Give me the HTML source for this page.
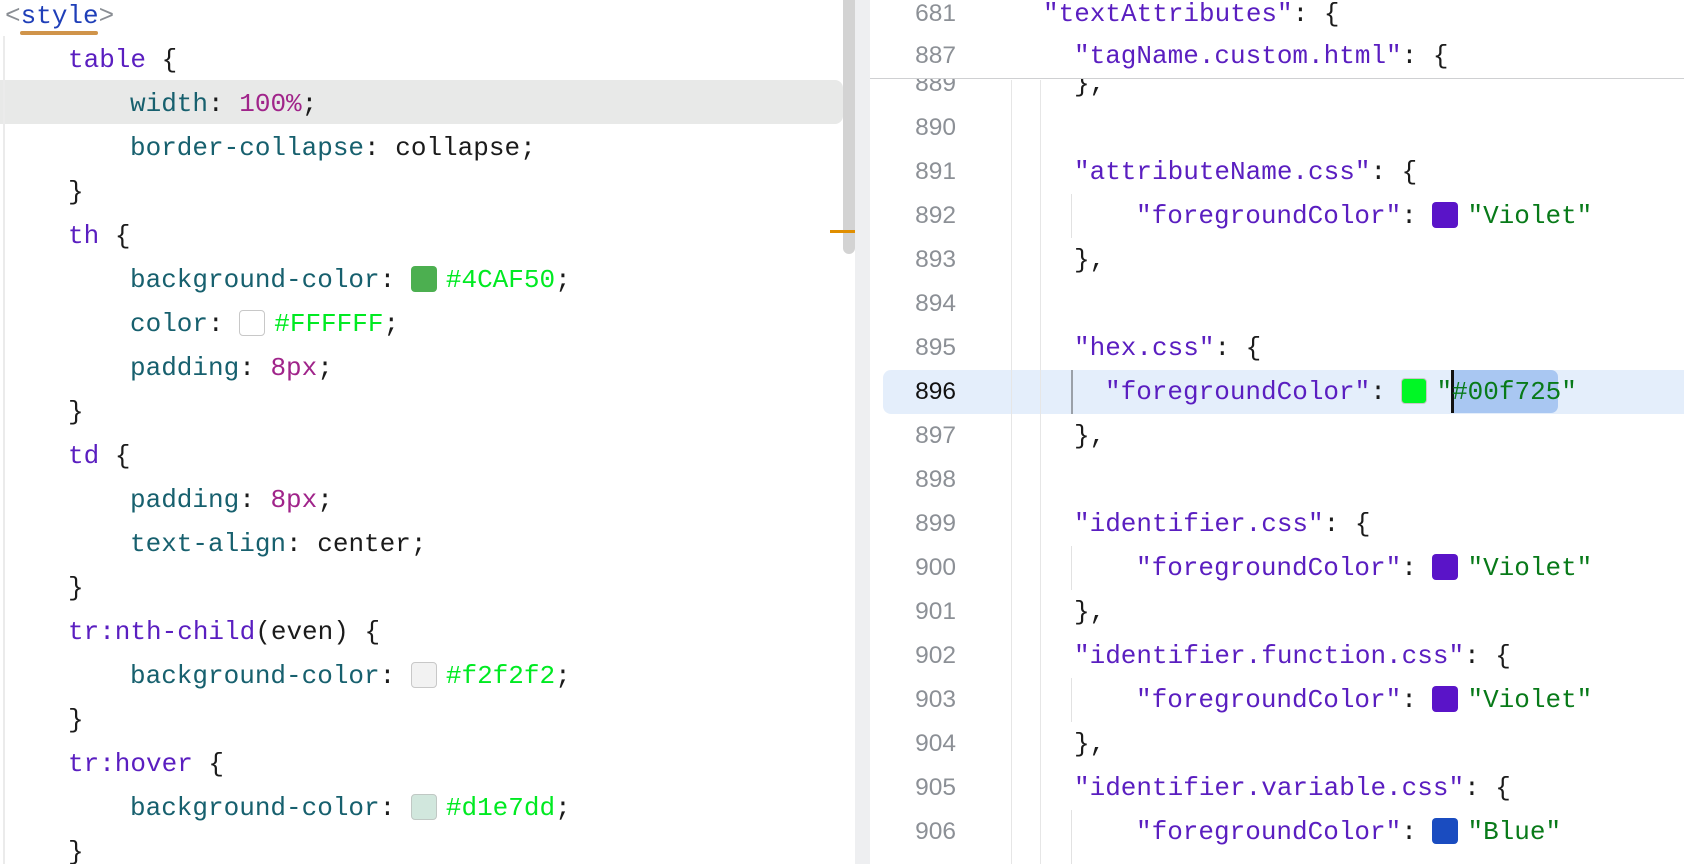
<!DOCTYPE html>
<html><head><meta charset="utf-8"><style>
html,body{margin:0;padding:0;width:1684px;height:864px;overflow:hidden;background:#fff;}
#w{position:relative;width:1684px;height:864px;overflow:hidden;}
.m{font-family:"Liberation Mono","DejaVu Sans Mono",monospace;font-size:26px;white-space:pre;}
.l{position:absolute;height:44px;line-height:44px;}
.k{color:#5a1ec0}.p{color:#17606e}.v{color:#a0248a}.d{color:#1b1b1b}.g{color:#00ea22}.s{color:#087a19}.t{color:#8a8e94}
.n{position:absolute;width:60px;text-align:right;color:#8c9096;font-family:"Liberation Sans",sans-serif;font-size:24.5px;height:44px;line-height:44px;left:896px;}
.sw{display:inline-block;width:26px;height:26px;border-radius:4px;vertical-align:-5px;margin:0 9px 0 0;box-sizing:border-box;}
</style></head><body><div id="w">
<div style="position:absolute;left:0;top:80px;width:843px;height:44px;background:#e8e9e8;border-radius:0 8px 8px 0;"></div>
<div style="position:absolute;left:3px;top:36px;width:2px;height:828px;background:#ebebeb;"></div>
<div style="position:absolute;left:20px;top:31px;width:78px;height:4px;background:#d0944a;border-radius:2px;"></div>
<div class="m">
<div class="l" style="left:5px;top:-6px"><span class="t">&lt;</span><span style="color:#1f3fb8">style</span><span class="t">&gt;</span></div>
<div class="l" style="left:68px;top:38px"><span class="k">table</span><span class="d"> {</span></div>
<div class="l" style="left:130px;top:82px"><span class="p">width</span><span class="d">: </span><span class="v">100%</span><span class="d">;</span></div>
<div class="l" style="left:130px;top:126px"><span class="p">border-collapse</span><span class="d">: collapse;</span></div>
<div class="l" style="left:68px;top:170px"><span class="d">}</span></div>
<div class="l" style="left:68px;top:214px"><span class="k">th</span><span class="d"> {</span></div>
<div class="l" style="left:130px;top:258px"><span class="p">background-color</span><span class="d">: </span><span class="sw" style="background:#4caf50"></span><span class="g">#4CAF50</span><span class="d">;</span></div>
<div class="l" style="left:130px;top:302px"><span class="p">color</span><span class="d">: </span><span class="sw" style="background:#fff;border:1.5px solid #c8c8c8"></span><span class="g">#FFFFFF</span><span class="d">;</span></div>
<div class="l" style="left:130px;top:346px"><span class="p">padding</span><span class="d">: </span><span class="v">8px</span><span class="d">;</span></div>
<div class="l" style="left:68px;top:390px"><span class="d">}</span></div>
<div class="l" style="left:68px;top:434px"><span class="k">td</span><span class="d"> {</span></div>
<div class="l" style="left:130px;top:478px"><span class="p">padding</span><span class="d">: </span><span class="v">8px</span><span class="d">;</span></div>
<div class="l" style="left:130px;top:522px"><span class="p">text-align</span><span class="d">: center;</span></div>
<div class="l" style="left:68px;top:566px"><span class="d">}</span></div>
<div class="l" style="left:68px;top:610px"><span class="k">tr:nth-child</span><span class="d">(even) {</span></div>
<div class="l" style="left:130px;top:654px"><span class="p">background-color</span><span class="d">: </span><span class="sw" style="background:#f2f2f2;border:1.5px solid #c8c8c8"></span><span class="g">#f2f2f2</span><span class="d">;</span></div>
<div class="l" style="left:68px;top:698px"><span class="d">}</span></div>
<div class="l" style="left:68px;top:742px"><span class="k">tr:hover</span><span class="d"> {</span></div>
<div class="l" style="left:130px;top:786px"><span class="p">background-color</span><span class="d">: </span><span class="sw" style="background:#d1e7dd;border:1.5px solid #c0c8c4"></span><span class="g">#d1e7dd</span><span class="d">;</span></div>
<div class="l" style="left:68px;top:830px;height:34px;overflow:hidden"><span class="d">}</span></div>
</div>
<div style="position:absolute;left:843px;top:0;width:12px;height:254px;background:#d3d3d3;border-radius:0 0 6px 6px;"></div>
<div style="position:absolute;left:830px;top:230px;width:25px;height:3px;background:#e08e00;"></div>
<div style="position:absolute;left:855px;top:0;width:15px;height:864px;background:#eeeff1;"></div>
<div style="position:absolute;left:883px;top:370px;width:801px;height:44px;background:#e4eefb;border-radius:8px 0 0 8px;"></div>
<div style="position:absolute;left:1011px;top:80px;width:1px;height:784px;background:#e6e6e6;"></div>
<div style="position:absolute;left:1040px;top:80px;width:1px;height:784px;background:#e6e6e6;"></div>
<div style="position:absolute;left:1071px;top:194px;width:1px;height:44px;background:#e2e2e2;"></div>
<div style="position:absolute;left:1071px;top:370px;width:2px;height:44px;background:#9aa0a8;"></div>
<div style="position:absolute;left:1071px;top:546px;width:1px;height:44px;background:#e2e2e2;"></div>
<div style="position:absolute;left:1071px;top:678px;width:1px;height:44px;background:#e2e2e2;"></div>
<div style="position:absolute;left:1071px;top:810px;width:1px;height:54px;background:#e2e2e2;"></div>
<div style="position:absolute;left:1453px;top:370px;width:105px;height:43px;background:#a9c7f2;border-radius:0 7px 7px 0;"></div>
<div style="position:absolute;left:1451px;top:370px;width:3px;height:43px;background:#111;"></div>

<div class="n" style="top:62px">889</div>
<div class="n" style="top:106px">890</div>
<div class="n" style="top:150px">891</div>
<div class="n" style="top:194px">892</div>
<div class="n" style="top:238px">893</div>
<div class="n" style="top:282px">894</div>
<div class="n" style="top:326px">895</div>
<div class="n" style="top:370px;color:#111">896</div>
<div class="n" style="top:414px">897</div>
<div class="n" style="top:458px">898</div>
<div class="n" style="top:502px">899</div>
<div class="n" style="top:546px">900</div>
<div class="n" style="top:590px">901</div>
<div class="n" style="top:634px">902</div>
<div class="n" style="top:678px">903</div>
<div class="n" style="top:722px">904</div>
<div class="n" style="top:766px">905</div>
<div class="n" style="top:810px">906</div>
<div class="m">
<div class="l" style="left:1074px;top:62px"><span class="d">},</span></div>
<div class="l" style="left:1074px;top:150px"><span class="k">"attributeName.css"</span><span class="d">: {</span></div>
<div class="l" style="left:1136px;top:194px"><span class="k">"foregroundColor"</span><span class="d">: </span><span class="sw" style="background:#5a14c8"></span><span class="s">"Violet"</span></div>
<div class="l" style="left:1074px;top:238px"><span class="d">},</span></div>
<div class="l" style="left:1074px;top:326px"><span class="k">"hex.css"</span><span class="d">: {</span></div>
<div class="l" style="left:1105px;top:370px"><span class="k">"foregroundColor"</span><span class="d">: </span><span class="sw" style="background:#00f725;border:1.5px solid #c8c8c8"></span><span class="s">"#00f725"</span></div>
<div class="l" style="left:1074px;top:414px"><span class="d">},</span></div>
<div class="l" style="left:1074px;top:502px"><span class="k">"identifier.css"</span><span class="d">: {</span></div>
<div class="l" style="left:1136px;top:546px"><span class="k">"foregroundColor"</span><span class="d">: </span><span class="sw" style="background:#5a14c8"></span><span class="s">"Violet"</span></div>
<div class="l" style="left:1074px;top:590px"><span class="d">},</span></div>
<div class="l" style="left:1074px;top:634px"><span class="k">"identifier.function.css"</span><span class="d">: {</span></div>
<div class="l" style="left:1136px;top:678px"><span class="k">"foregroundColor"</span><span class="d">: </span><span class="sw" style="background:#5a14c8"></span><span class="s">"Violet"</span></div>
<div class="l" style="left:1074px;top:722px"><span class="d">},</span></div>
<div class="l" style="left:1074px;top:766px"><span class="k">"identifier.variable.css"</span><span class="d">: {</span></div>
<div class="l" style="left:1136px;top:810px"><span class="k">"foregroundColor"</span><span class="d">: </span><span class="sw" style="background:#1a4cc0"></span><span class="s">"Blue"</span></div>
</div>
<div style="position:absolute;left:870px;top:0;width:814px;height:78px;background:#fff;border-bottom:1px solid #cfd0d2;"></div>
<div class="n" style="top:-8px">681</div>
<div class="n" style="top:34px">887</div>
<div class="m">
<div class="l" style="left:1043px;top:-8px"><span class="k">"textAttributes"</span><span class="d">: {</span></div>
<div class="l" style="left:1074px;top:34px"><span class="k">"tagName.custom.html"</span><span class="d">: {</span></div>
</div>
</div></body></html>
